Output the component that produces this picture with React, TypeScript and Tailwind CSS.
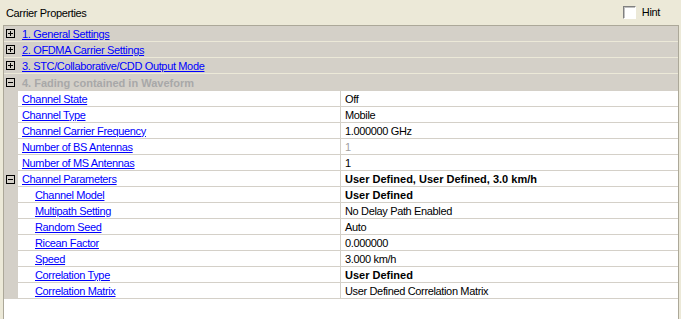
const font = { fontFamily: '"Liberation Sans", Arial, sans-serif' };

type Row = {
  name: string;
  value: string;
  indent?: boolean;
  bold?: boolean;
  dim?: boolean;
  toggle?: boolean;
};

const groups = [
  "1. General Settings",
  "2. OFDMA Carrier Settings",
  "3. STC/Collaborative/CDD Output Mode",
];

const rows: Row[] = [
  { name: "Channel State", value: "Off" },
  { name: "Channel Type", value: "Mobile" },
  { name: "Channel Carrier Frequency", value: "1.000000 GHz" },
  { name: "Number of BS Antennas", value: "1", dim: true },
  { name: "Number of MS Antennas", value: "1" },
  { name: "Channel Parameters", value: "User Defined, User Defined, 3.0 km/h", bold: true, toggle: true },
  { name: "Channel Model", value: "User Defined", indent: true, bold: true },
  { name: "Multipath Setting", value: "No Delay Path Enabled", indent: true },
  { name: "Random Seed", value: "Auto", indent: true },
  { name: "Ricean Factor", value: "0.000000", indent: true },
  { name: "Speed", value: "3.000 km/h", indent: true },
  { name: "Correlation Type", value: "User Defined", indent: true, bold: true },
  { name: "Correlation Matrix", value: "User Defined Correlation Matrix", indent: true },
];

function ToggleBox({ open }: { open?: boolean }) {
  return (
    <svg width="9" height="9" viewBox="0 0 9 9" className="shrink-0">
      <rect x="0.5" y="0.5" width="8" height="8" fill="none" stroke="#000" />
      <path d="M2 4.5h5" stroke="#000" />
      {!open && <path d="M4.5 2v5" stroke="#000" />}
    </svg>
  );
}

export default function App() {
  return (
    <div className="w-[681px] h-[319px] bg-[#ECE9D8] text-[11px] text-black flex flex-col overflow-hidden" style={font}>
      <div className="h-[25px] flex items-center justify-between pl-[6px] pr-[21px] tracking-[-0.35px]">
        <span className="pt-[1px]">Carrier Properties</span>
        <label className="flex items-center gap-[6px]">
          <span className="w-[13px] h-[13px] bg-white border border-t-[#808080] border-l-[#808080] border-b-white border-r-white shadow-[inset_1px_1px_0_#c0c0c0]" />
          <span>Hint</span>
        </label>
      </div>

      <div className="flex-1 ml-[3px] mr-[2px] border-t border-l border-r border-[#ACA899] bg-white flex flex-col">
        {groups.map((g) => (
          <div key={g} className="h-[16px] bg-[#D4D0C8] border-b border-[#ECE9D8] flex items-center pl-[2px]">
            <ToggleBox />
            <span className="ml-[7px] pt-[1px] text-[#0000FF] underline tracking-[-0.35px]">{g}</span>
          </div>
        ))}
        <div className="h-[17px] bg-[#D4D0C8] flex items-center pl-[2px]">
          <ToggleBox open />
          <span className="ml-[7px] pt-[1px] font-bold text-[#A8A8A8]">4. Fading contained in Waveform</span>
        </div>

        {rows.map((r) => (
          <div key={r.name} className="h-[16px] flex">
            <div className="w-[14px] bg-[#D4D0C8] flex items-center pl-[2px]">
              {r.toggle && <ToggleBox open />}
            </div>
            <div className="flex-1 flex border-b border-[#D4D0C8]">
              <div className={`w-[323px] border-r border-[#D4D0C8] flex items-center pt-[1px] ${r.indent ? "pl-[17px]" : "pl-[4px]"}`}>
                <span className="text-[#0000FF] underline leading-none tracking-[-0.35px]">{r.name}</span>
              </div>
              <div className={`flex-1 flex items-center pt-[1px] pl-[4px] ${r.bold ? "font-bold" : "tracking-[-0.35px]"} ${r.dim ? "text-[#A0A0A0]" : ""}`}>
                {r.value}
              </div>
            </div>
          </div>
        ))}
      </div>
    </div>
  );
}
